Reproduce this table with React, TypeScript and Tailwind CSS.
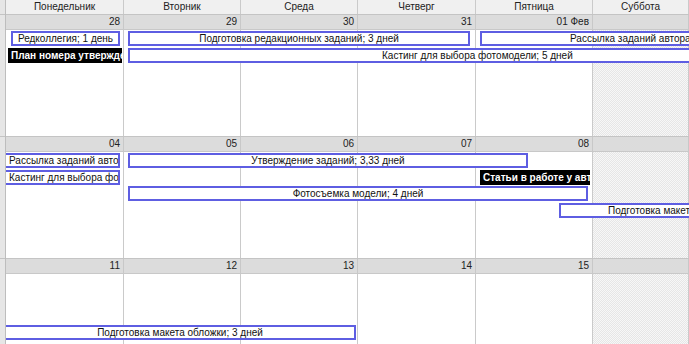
import React from 'react';

const cols = 'grid grid-cols-[118px_117px_117px_118px_117px_1fr]';
const days = ['Понедельник', 'Вторник', 'Среда', 'Четверг', 'Пятница', 'Суббота'];
const colStart = ['col-start-1', 'col-start-2', 'col-start-3', 'col-start-4', 'col-start-5', 'col-start-6'];

type Bar = {
  cls: string; // grid placement + margins
  text: string;
  kind?: 'blue' | 'black';
  align?: string;
  noLeft?: boolean;
  noRight?: boolean;
};

type Week = { dates: string[]; bars: Bar[] };

const weeks: Week[] = [
  {
    dates: ['28', '29', '30', '31', '01 Фев', ''],
    bars: [
      { cls: 'col-start-1 col-span-1 row-start-2 ml-[5px] mr-[4px]', text: 'Редколлегия; 1 день', align: 'justify-center' },
      { cls: 'col-start-2 col-span-3 row-start-2 ml-[4px] mr-[6px]', text: 'Подготовка редакционных заданий; 3 дней', align: 'justify-center' },
      { cls: 'col-start-5 col-span-2 row-start-2 ml-[4px]', text: 'Рассылка заданий авторам; 2 дней', align: 'pl-[88px]', noRight: true },
      { cls: 'col-start-1 col-span-1 row-start-3 ml-[2px] mr-[2px]', text: 'План номера утверждение', kind: 'black' },
      { cls: 'col-start-2 col-span-5 row-start-3 ml-[4px]', text: 'Кастинг для выбора фотомодели; 5 дней', align: 'pl-[252px]', noRight: true },
    ],
  },
  {
    dates: ['04', '05', '06', '07', '08', ''],
    bars: [
      { cls: 'col-start-1 col-span-1 row-start-2 mr-[4px]', text: 'Рассылка заданий авторам', align: 'pl-[3px]', noLeft: true },
      { cls: 'col-start-2 col-span-4 row-start-2 ml-[4px] mr-[65px]', text: 'Утверждение заданий; 3,33 дней', align: 'justify-center' },
      { cls: 'col-start-1 col-span-1 row-start-3 mr-[4px]', text: 'Кастинг для выбора фотомодели', align: 'pl-[3px]', noLeft: true },
      { cls: 'col-start-5 col-span-1 row-start-3 ml-[4px] mr-[3px]', text: 'Статьи в работе у авторов', kind: 'black' },
      { cls: 'col-start-2 col-span-4 row-start-4 ml-[4px] mr-[5px]', text: 'Фотосъемка модели; 4 дней', align: 'justify-center' },
      { cls: 'col-start-5 col-span-2 row-start-5 ml-[83px]', text: 'Подготовка макета обложки; 3 дней', align: 'pl-[47px]', noRight: true },
    ],
  },
  {
    dates: ['11', '12', '13', '14', '15', ''],
    bars: [
      { cls: 'col-start-1 col-span-3 row-start-5 mr-[2px]', text: 'Подготовка макета обложки; 3 дней', align: 'justify-center', noLeft: true },
    ],
  },
];

const BarView: React.FC<{ bar: Bar }> = ({ bar }) => {
  if (bar.kind === 'black') {
    return (
      <div className={`${bar.cls} mt-[1px] h-[15px] bg-black text-white font-bold flex items-center pl-[3px] overflow-hidden whitespace-nowrap`}>
        {bar.text}
      </div>
    );
  }
  return (
    <div
      className={`${bar.cls} mt-[1px] h-[15px] bg-white border-y-2 border-[#5e5ee2] ${bar.noLeft ? '' : 'border-l-2'} ${bar.noRight ? '' : 'border-r-2'} flex items-center ${bar.align ?? ''} overflow-hidden whitespace-nowrap text-[#111]`}
    >
      {bar.text}
    </div>
  );
};

const WeekRow: React.FC<{ week: Week }> = ({ week }) => (
  <div className={`${cols} grid-rows-[15px_repeat(6,16.5px)_1fr] h-[122px] shrink-0 border-b border-[#c4c4c4]`}>
    {days.map((_, i) => (
      <div
        key={'bg' + i}
        className={`${colStart[i]} row-span-full border-r border-[#cacaca] ${
          i === 5
            ? 'bg-[repeating-conic-gradient(#e6e6e6_0_25%,#f7f7f7_0_50%)] bg-[length:2px_2px]'
            : 'bg-white'
        }`}
      />
    ))}
    {week.dates.map((d, i) => (
      <div
        key={'d' + i}
        className={`${colStart[i]} row-start-1 bg-[#dcdcdc] border-r border-b border-[#c8c8c8] text-right pr-[3px] leading-[14px] text-[#222]`}
      >
        {d}
      </div>
    ))}
    {week.bars.map((b, i) => (
      <BarView key={'b' + i} bar={b} />
    ))}
  </div>
);

export default function App() {
  return (
    <div className="w-[689px] h-[344px] overflow-hidden bg-white flex text-[10px] font-['Liberation_Sans',Arial,sans-serif]">
      <div className="w-[6px] shrink-0 bg-[#e6e6e6] border-r border-[#bdbdbd] flex flex-col">
        <div className="h-[15px] border-b border-[#c4c4c4] shrink-0" />
        <div className="h-[122px] border-b border-[#c4c4c4] shrink-0" />
        <div className="h-[122px] border-b border-[#c4c4c4] shrink-0" />
      </div>
      <div className="flex-1 flex flex-col min-w-0">
        <div className={`${cols} h-[15px] shrink-0 bg-[#f0f0f0] border-b border-[#c4c4c4]`}>
          {days.map((d) => (
            <div key={d} className="border-r border-[#cacaca] text-center leading-[14px] text-[#222]">
              {d}
            </div>
          ))}
        </div>
        {weeks.map((w, i) => (
          <WeekRow key={i} week={w} />
        ))}
      </div>
    </div>
  );
}
